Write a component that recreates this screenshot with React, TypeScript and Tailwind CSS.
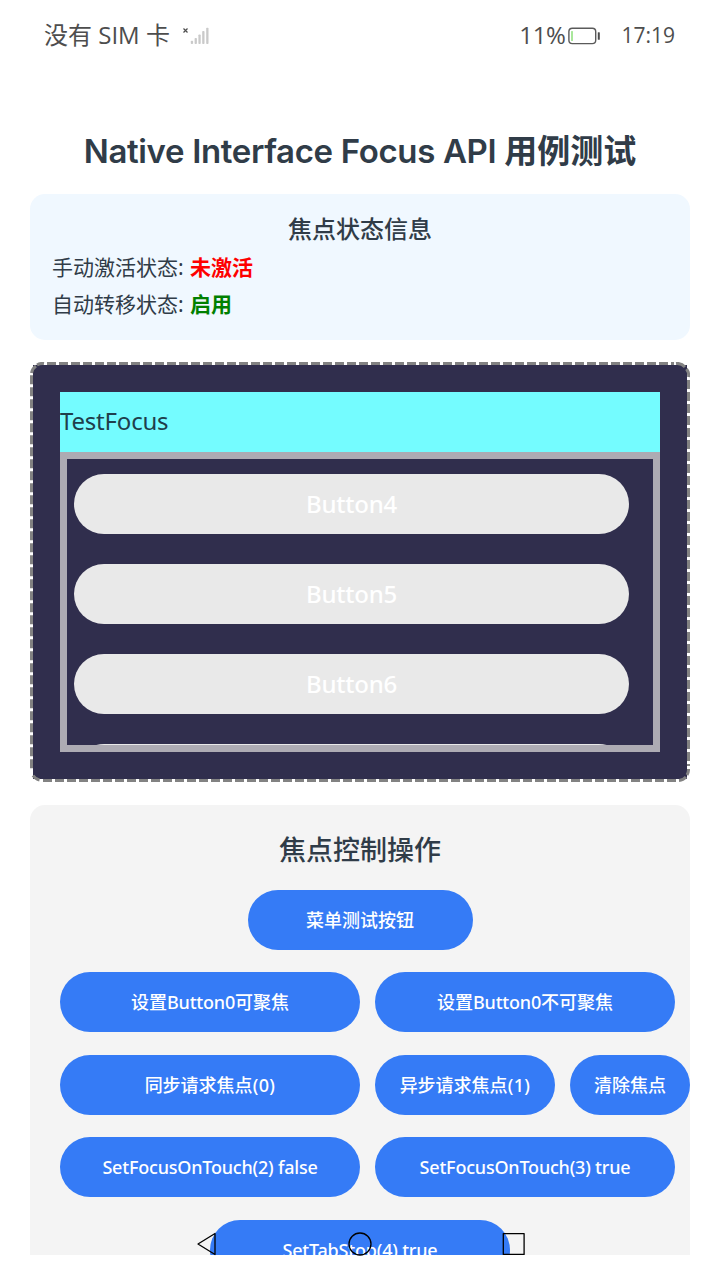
import type { ReactNode } from "react";

function ActionButton({ width, children }: { width: string; children: ReactNode }) {
  return (
    <button
      className={`flex h-[60px] shrink-0 items-center justify-center rounded-full bg-[#357bf6] text-lg font-medium whitespace-nowrap text-white ${width}`}
    >
      <span>{children}</span>
    </button>
  );
}

function Latin({ children }: { children: ReactNode }) {
  return <span className="tracking-[-0.2px]">{children}</span>;
}

function StatusBar() {
  return (
    <header className="flex h-[72px] shrink-0 items-center pr-[45px] pl-11 pb-[2px] font-['Open_Sans','Noto_Sans_CJK_SC',sans-serif] text-2xl text-[#4d4d4d]">
      <span className="whitespace-pre">没有 SIM 卡</span>
      <svg className="ml-3" width="28" height="20" viewBox="0 0 28 20">
        <path d="M1.5 3.5l4 4M5.5 3.5l-4 4" stroke="#4d4d4d" strokeWidth="1.2" />
        <g fill="#cacaca">
          <rect x="8.8" y="15.7" width="2.3" height="3.3" rx="0.8" />
          <rect x="12.6" y="13" width="2.3" height="6" rx="0.8" />
          <rect x="16.4" y="9.5" width="2.3" height="9.5" rx="0.8" />
          <rect x="20.2" y="6" width="2.3" height="13" rx="0.8" />
          <rect x="24.2" y="2.8" width="2.3" height="16.2" rx="0.8" />
        </g>
      </svg>
      <span className="ml-auto tracking-[-0.4px]">11%</span>
      <svg className="ml-[3px] mt-[2px]" width="33" height="18" viewBox="0 0 33 18">
        <rect x="0.9" y="1.2" width="26.8" height="15.4" rx="3.4" fill="none" stroke="#5a5a5a" strokeWidth="1.4" />
        <rect x="3" y="4" width="2" height="10" rx="0.5" fill="#a9e79b" />
        <rect x="29.8" y="5.2" width="2" height="7.6" rx="0.6" fill="#4d4d4d" />
      </svg>
      <span className="ml-5 text-[21px]">17:19</span>
    </header>
  );
}

function DashedFrame() {
  return (
    <svg className="absolute inset-0" width="660" height="420" viewBox="0 0 660 420" fill="none" stroke="#828282" strokeWidth="3">
      <path d="M17 1.5H644" strokeDasharray="9 3" />
      <path d="M658.5 18V404" strokeDasharray="9 3" />
      <path d="M13 418.5H646" strokeDasharray="9 3" />
      <path d="M1.5 13.3V409" strokeDasharray="9 3" />
      <path d="M1.5 11A10.5 10.5 0 0 1 6 4" />
      <path d="M7 3A10.5 10.5 0 0 1 14 1.5" />
      <path d="M646 1.5A10.5 10.5 0 0 1 655 5" />
      <path d="M656.5 7A10.5 10.5 0 0 1 658.5 15" />
      <path d="M658.5 407A10.5 10.5 0 0 1 657 413" />
      <path d="M656 415A10.5 10.5 0 0 1 649 418.5" />
      <path d="M3 413.5A10.5 10.5 0 0 0 9.5 418" />
    </svg>
  );
}

function FocusPanel() {
  return (
    <section className="relative mt-[22px] h-[420px] shrink-0 p-[3px]">
      <div className="h-full bg-[#302e4d] px-[27px] pt-[27px]">
        <div className="flex h-[60px] items-center bg-[#74fcff] pb-[2px] text-2xl tracking-[-0.2px] text-[#1f3f4c]">TestFocus</div>
        <div className="flex h-[300px] flex-col gap-[30px] overflow-hidden border-[7px] border-[#adabb3] pt-[15px] pl-[7px]">
          {["Button4", "Button5", "Button6"].map((label) => (
            <button
              key={label}
              className="flex h-[60px] w-[555px] shrink-0 items-center justify-center rounded-full bg-[#e9e9e9] pb-px text-2xl font-medium tracking-[-0.2px] text-white"
            >
              {label}
            </button>
          ))}
          <button className="h-[60px] w-[555px] shrink-0 rounded-full bg-[#e9e9e9]" />
        </div>
      </div>
      <DashedFrame />
    </section>
  );
}

function NavigationBar() {
  return (
    <nav className="absolute inset-x-0 bottom-0 h-[50px]">
      <svg width="720" height="50" viewBox="0 0 720 50" fill="none" stroke="#000" strokeWidth="1.3" strokeLinejoin="round">
        <path d="M198 14L215 3.5V24.5Z" />
        <circle cx="360" cy="14" r="11" />
        <rect x="503.3" y="3.6" width="20.8" height="20.8" />
      </svg>
    </nav>
  );
}

export default function App() {
  return (
    <div className="relative flex h-[1280px] w-[720px] flex-col overflow-hidden bg-white font-['Noto_Sans','Noto_Sans_CJK_SC',sans-serif] text-[#303c48]">
      <StatusBar />
      <main className="flex h-[1183px] shrink-0 flex-col overflow-hidden px-[30px] pt-[59px]">
        <h1 className="shrink-0 text-center font-['Inter','Noto_Sans_CJK_SC',sans-serif] text-[33px] leading-[40px] font-semibold whitespace-pre">
          <span className="tracking-[-0.35px]">Native Interface Focus API </span>
          <span className="font-bold">用例测试</span>
        </h1>
        <section className="mt-[23px] h-[146px] shrink-0 rounded-[15px] bg-[#f0f8ff] px-[22px] pt-[17px]">
          <h2 className="text-center text-2xl leading-[36px] font-medium">焦点状态信息</h2>
          <p className="mt-[2px] text-[21px] leading-[37px] whitespace-pre">
            手动激活状态: <b className="ml-px text-[#fe0000]">未激活</b>
          </p>
          <p className="text-[21px] leading-[37px] whitespace-pre">
            自动转移状态: <b className="ml-px text-[#008000]">启用</b>
          </p>
        </section>
        <FocusPanel />
        <section className="mt-[23px] flex h-[600px] shrink-0 flex-col gap-[22.4px] rounded-[15px] bg-[#f4f4f4] px-[30px] pt-[25px]">
          <h2 className="-mb-[2.4px] text-center text-[27px] leading-[40px] font-medium">焦点控制操作</h2>
          <div className="flex justify-center">
            <ActionButton width="w-[225px]">菜单测试按钮</ActionButton>
          </div>
          <div className="flex gap-[15px]">
            <ActionButton width="w-[300px]">设置<Latin>Button0</Latin>可聚焦</ActionButton>
            <ActionButton width="w-[300px]">设置<Latin>Button0</Latin>不可聚焦</ActionButton>
          </div>
          <div className="flex gap-[15px]">
            <ActionButton width="w-[300px]">同步请求焦点<span className="tracking-[0.4px]">(0)</span></ActionButton>
            <ActionButton width="w-[180px]">异步请求焦点<span className="tracking-[0.4px]">(1)</span></ActionButton>
            <ActionButton width="w-[120px]">清除焦点</ActionButton>
          </div>
          <div className="flex gap-[15px]">
            <ActionButton width="w-[300px]"><Latin>SetFocusOnTouch(2) false</Latin></ActionButton>
            <ActionButton width="w-[300px]"><Latin>SetFocusOnTouch(3) true</Latin></ActionButton>
          </div>
          <div className="flex justify-center">
            <ActionButton width="w-[300px]"><Latin>SetTabStop(4) true</Latin></ActionButton>
          </div>
        </section>
      </main>
      <NavigationBar />
    </div>
  );
}
